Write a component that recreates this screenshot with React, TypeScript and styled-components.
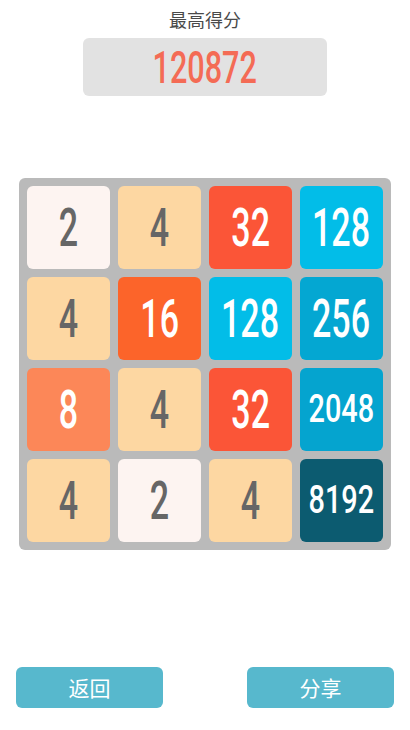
import React from "react";
import styled, { createGlobalStyle } from "styled-components";

const Global = createGlobalStyle`
  html, body { margin: 0; padding: 0; background: #ffffff; }
  body { font-family: "Noto Sans CJK SC", "Noto Sans", sans-serif; }
  * { box-sizing: border-box; }
`;

const Page = styled.div`
  width: 410px;
  height: 730px;
  display: flex;
  flex-direction: column;
  align-items: center;
  background: #fff;
`;

const Title = styled.div`
  margin-top: 6px;
  height: 26px;
  font-size: 18px;
  line-height: 26px;
  color: #4a4a4a;
  font-family: "Noto Sans CJK SC", sans-serif;
`;

const ScoreBox = styled.div`
  margin-top: 6px;
  width: 244px;
  height: 58px;
  border-radius: 6px;
  background: #e2e2e2;
  display: flex;
  align-items: center;
  justify-content: center;
  overflow: hidden;
`;

const Num = styled.span<{ $size: number; $color: string; $sx: number }>`
  display: inline-block;
  font-family: Roboto, "Liberation Sans", sans-serif;
  font-weight: 500;
  font-size: ${(p) => p.$size}px;
  line-height: 1;
  color: ${(p) => p.$color};
  transform: scaleX(${(p) => p.$sx});
  white-space: nowrap;
`;

const Board = styled.div`
  margin-top: 82px;
  width: 372px;
  height: 372px;
  padding: 8px;
  border-radius: 6px;
  background: #bababa;
  display: grid;
  grid-template-columns: repeat(4, 83px);
  grid-template-rows: repeat(4, 83px);
  gap: 8px;
`;

const Tile = styled.div<{ $bg: string }>`
  border-radius: 6px;
  background: ${(p) => p.$bg};
  display: flex;
  align-items: center;
  justify-content: center;
  overflow: hidden;
`;

const Footer = styled.div`
  margin-top: auto;
  margin-bottom: 22px;
  width: 100%;
  padding: 0 16px;
  display: flex;
  justify-content: space-between;
`;

const Button = styled.button`
  width: 147px;
  height: 41px;
  border: none;
  border-radius: 6px;
  background: #57b8cd;
  color: #ffffff;
  font-family: "Noto Sans CJK SC", sans-serif;
  font-size: 21px;
  line-height: 41px;
  padding: 0;
`;

const styles: Record<number, { bg: string; fg: string }> = {
  2: { bg: "#fdf4f1", fg: "#666666" },
  4: { bg: "#fdd7a2", fg: "#666666" },
  8: { bg: "#fc8758", fg: "#ffffff" },
  16: { bg: "#fc642a", fg: "#ffffff" },
  32: { bg: "#fb5537", fg: "#ffffff" },
  128: { bg: "#02bde8", fg: "#ffffff" },
  256: { bg: "#04a7d2", fg: "#ffffff" },
  2048: { bg: "#05a4cf", fg: "#ffffff" },
  8192: { bg: "#0c5b70", fg: "#ffffff" },
};

const grid = [
  [2, 4, 32, 128],
  [4, 16, 128, 256],
  [8, 4, 32, 2048],
  [4, 2, 4, 8192],
];

export default function App() {
  return (
    <Page>
      <Global />
      <Title>最高得分</Title>
      <ScoreBox>
        <Num $size={45} $color="#f46b55" $sx={0.68}>120872</Num>
      </ScoreBox>
      <Board>
        {grid.flat().map((v, i) => {
          const s = styles[v];
          const big = v >= 1000;
          return (
            <Tile key={i} $bg={s.bg}>
              <Num $size={big ? 39 : 54} $color={s.fg} $sx={big ? 0.74 : 0.63}>
                {v}
              </Num>
            </Tile>
          );
        })}
      </Board>
      <Footer>
        <Button>返回</Button>
        <Button>分享</Button>
      </Footer>
    </Page>
  );
}
